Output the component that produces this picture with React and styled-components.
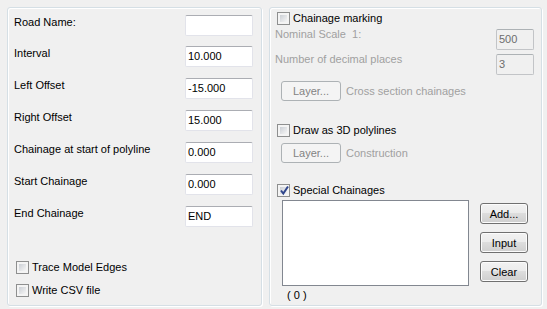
import styled, { createGlobalStyle } from 'styled-components'

const GlobalStyle = createGlobalStyle`
  body {
    margin: 0;
    background: #f0f0f0;
    font-family: "Liberation Sans", Arial, sans-serif;
    font-size: 11px;
    color: #000;
  }
`

const Dialog = styled.div`
  display: flex;
  gap: 7px;
  padding: 7px 0 0 7px;
  width: 547px;
  height: 309px;
  box-sizing: border-box;
`

const Group = styled.div`
  width: ${p => p.$w}px;
  height: 299px;
  box-sizing: border-box;
  border: 1px solid #d5dfe5;
  border-radius: 3px;
  box-shadow: inset 1px 1px 0 #fff, 1px 1px 0 #fff;
  display: flex;
  flex-direction: column;
  padding: ${p => p.$pad};
`

const FieldRow = styled.div`
  display: flex;
  justify-content: space-between;
  align-items: flex-start;
  margin-bottom: ${p => p.$mb ?? 11}px;
`

const Label = styled.span`
  line-height: 13px;
  margin-top: ${p => p.$dy ?? 1}px;
  color: ${p => (p.$disabled ? '#a0a0a0' : '#000')};
  white-space: nowrap;
`

const TextBox = styled.div`
  width: ${p => p.$w ?? 68}px;
  height: 21px;
  box-sizing: border-box;
  padding: 0 2px;
  line-height: 19px;
  border: 1px solid ${p => (p.$disabled ? '#c2c4c7' : '#e2e3ea')};
  border-top-color: ${p => (p.$disabled ? '#adb2b5' : '#abadb3')};
  border-radius: 2px;
  background: ${p => (p.$disabled ? '#f0f0f0' : '#fff')};
  color: ${p => (p.$disabled ? '#6d6d6d' : '#000')};
`

const Spacer = styled.div`
  flex: 1;
`

const CheckRow = styled.label`
  display: flex;
  align-items: center;
  gap: 3px;
  height: 13px;
  margin: ${p => p.$m ?? '0'};
  line-height: 13px;
  white-space: nowrap;
`

const Box = styled.span`
  width: 13px;
  height: 13px;
  box-sizing: border-box;
  border: 1px solid #8e8f8f;
  background: #f4f4f4;
  padding: 2px;
  display: flex;
  flex-shrink: 0;
  position: relative;

  &::before {
    content: "";
    flex: 1;
    background: linear-gradient(135deg, #cbcfd5 0%, #f6f6f6 100%);
  }

  svg {
    position: absolute;
    left: 0;
    top: -1px;
  }
`

const ButtonRow = styled.div`
  display: flex;
  align-items: center;
  gap: 5px;
  margin: ${p => p.$m};
`

const Button = styled.div`
  width: ${p => p.$w}px;
  height: ${p => p.$h ?? 21}px;
  box-sizing: border-box;
  border-radius: 3px;
  display: flex;
  align-items: center;
  justify-content: center;
  border: 1px solid ${p => (p.$disabled ? '#adb2b5' : '#707070')};
  color: ${p => (p.$disabled ? '#838383' : '#000')};
  background: ${p =>
    p.$disabled
      ? '#f4f4f4'
      : 'linear-gradient(#f2f2f2 0%, #ebebeb 50%, #dddddd 50%, #cfcfcf 100%)'};
  box-shadow: inset 0 0 0 1px ${p => (p.$disabled ? '#f4f4f4' : '#fcfcfc')};
`

const ListArea = styled.div`
  display: flex;
  gap: 11px;
  margin: 3px 0 0 7px;
`

const ListBox = styled.div`
  width: 187px;
  height: 86px;
  box-sizing: border-box;
  border: 1px solid #828790;
  background: #fff;
`

const SideButtons = styled.div`
  display: flex;
  flex-direction: column;
  gap: 8px;
  padding-top: 3px;
`

const Count = styled.div`
  margin: 3px 0 0 12px;
  line-height: 13px;
`

function Check({ checked, children, m }) {
  return (
    <CheckRow $m={m}>
      <Box>
        {checked && (
          <svg width="13" height="13" viewBox="0 0 13 13">
            <path d="M3 6.5 L5.3 9.5 L10 2.5" fill="none" stroke="#30468c" strokeWidth="2" />
          </svg>
        )}
      </Box>
      <span>{children}</span>
    </CheckRow>
  )
}

const fields = [
  ['Road Name:', '', 10],
  ['Interval', '10.000'],
  ['Left Offset', '-15.000'],
  ['Right Offset', '15.000'],
  ['Chainage at start of polyline', '0.000'],
  ['Start Chainage', '0.000'],
  ['End Chainage', 'END'],
]

function App() {
  return (
    <>
      <GlobalStyle />
      <Dialog>
        <Group $w={255} $pad="7px 8px 8px 6px">
          {fields.map(([label, value, mb]) => (
            <FieldRow key={label} $mb={mb}>
              <Label>{label}</Label>
              <TextBox>{value}</TextBox>
            </FieldRow>
          ))}
          <Spacer />
          <Check m="0 0 0 2px">Trace Model Edges</Check>
          <Check m="10px 0 0 2px">Write CSV file</Check>
        </Group>

        <Group $w={273} $pad="4px 7px 0 5px">
          <Check m="0 0 0 2px">Chainage marking</Check>
          <FieldRow $mb={4} style={{ marginTop: 4 }}>
            <Label $disabled $dy={-1}>Nominal Scale&nbsp;&nbsp;1:</Label>
            <TextBox $w={38} $disabled>500</TextBox>
          </FieldRow>
          <FieldRow $mb={0}>
            <Label $disabled $dy={-1}>Number of decimal places</Label>
            <TextBox $w={38} $disabled>3</TextBox>
          </FieldRow>
          <ButtonRow $m="6px 0 0 6px">
            <Button $w={60} $h={20} $disabled>Layer...</Button>
            <Label $disabled $dy={0}>Cross section chainages</Label>
          </ButtonRow>
          <Check m="23px 0 0 2px">Draw as 3D polylines</Check>
          <ButtonRow $m="6px 0 0 6px">
            <Button $w={60} $h={20} $disabled>Layer...</Button>
            <Label $disabled $dy={0}>Construction</Label>
          </ButtonRow>
          <Check checked m="21px 0 0 2px">Special Chainages</Check>
          <ListArea>
            <ListBox />
            <SideButtons>
              <Button $w={48}>Add...</Button>
              <Button $w={48}>Input</Button>
              <Button $w={48}>Clear</Button>
            </SideButtons>
          </ListArea>
          <Count>( 0 )</Count>
        </Group>
      </Dialog>
    </>
  )
}

export default App
